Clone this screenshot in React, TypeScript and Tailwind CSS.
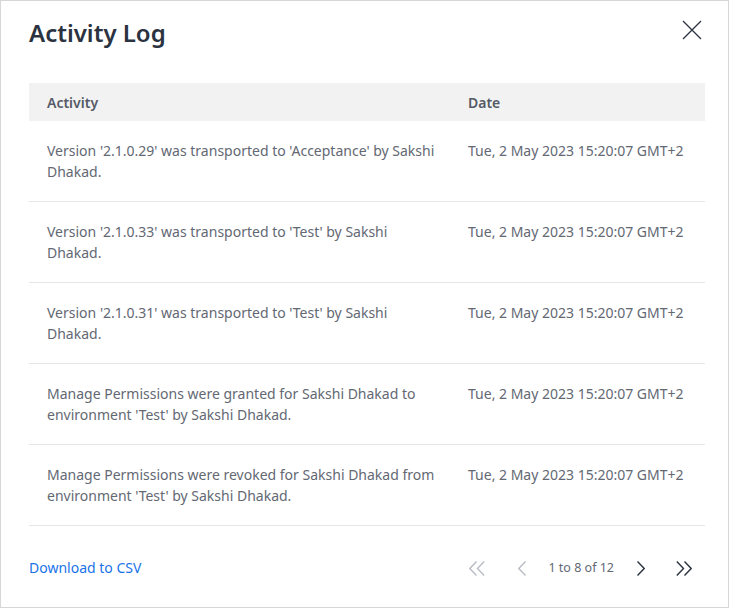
import React from "react";

const rows = [
  "Version '2.1.0.29' was transported to 'Acceptance' by Sakshi Dhakad.",
  "Version '2.1.0.33' was transported to 'Test' by Sakshi Dhakad.",
  "Version '2.1.0.31' was transported to 'Test' by Sakshi Dhakad.",
  "Manage Permissions were granted for Sakshi Dhakad to environment 'Test' by Sakshi Dhakad.",
  "Manage Permissions were revoked for Sakshi Dhakad from environment 'Test' by Sakshi Dhakad.",
];

const DATE = "Tue, 2 May 2023 15:20:07 GMT+2";

function Chevron({ dir, double, color }: { dir: "left" | "right"; double?: boolean; color: string }) {
  const w = double ? 16 : 8;
  const paths =
    dir === "left"
      ? double
        ? ["M7.5 0.5 L0.8 7.5 L7.5 14.5", "M15.2 0.5 L8.5 7.5 L15.2 14.5"]
        : ["M7.5 0.5 L0.8 7.5 L7.5 14.5"]
      : double
      ? ["M0.8 0.5 L7.5 7.5 L0.8 14.5", "M8.5 0.5 L15.2 7.5 L8.5 14.5"]
      : ["M0.5 0.5 L7.2 7.5 L0.5 14.5"];
  return (
    <svg width={w} height={15} viewBox={`0 0 ${w} 15`} fill="none" stroke={color} strokeWidth={1.4}>
      {paths.map((d) => (
        <path key={d} d={d} />
      ))}
    </svg>
  );
}

export default function App() {
  return (
    <div className="w-[729px] h-[608px] bg-white border border-[#d6d6d6] font-['Noto_Sans',sans-serif] flex flex-col">
      <div className="flex items-start justify-between pl-7 pr-[26px] pt-[16px]">
        <h1 className="text-[24px] leading-[32px] font-semibold text-[#2b3240]">Activity Log</h1>
        <button className="mt-[3px] w-5 h-5 flex items-center justify-center">
          <svg width="20" height="20" viewBox="0 0 20 20" fill="none" stroke="#2b3240" strokeWidth={1.3}>
            <path d="M1 1 L19 19 M19 1 L1 19" />
          </svg>
        </button>
      </div>

      <div className="ml-7 mr-[23px] mt-[34px]">
        <div className="grid grid-cols-[421px_1fr] bg-[#f2f2f2] h-[38px] items-center text-[14px] font-semibold text-[#545a66]">
          <div className="pl-[18px]">Activity</div>
          <div className="pl-[18px]">Date</div>
        </div>
        {rows.map((r) => (
          <div
            key={r}
            className="grid grid-cols-[421px_1fr] border-b border-[#e6e6e6] py-[19px] text-[14px] leading-[21px] text-[#636873]"
          >
            <div className="pl-[18px] pr-3">{r}</div>
            <div className="pl-[18px] whitespace-nowrap">{DATE}</div>
          </div>
        ))}
      </div>

      <div className="flex items-center justify-between ml-7 mr-[23px] mt-[32px]">
        <a className="text-[14px] text-[#1a73e8] leading-[20px]">Download to CSV</a>
        <div className="flex items-center text-[12.5px] text-[#636873] mr-[13px]">
          <Chevron dir="left" double color="#b8bcc4" />
          <span className="ml-[33px]">
            <Chevron dir="left" color="#b8bcc4" />
          </span>
          <span className="ml-[22px]">1 to 8 of 12</span>
          <span className="ml-[23px]">
            <Chevron dir="right" color="#2b3240" />
          </span>
          <span className="ml-[31px]">
            <Chevron dir="right" double color="#2b3240" />
          </span>
        </div>
      </div>
    </div>
  );
}
